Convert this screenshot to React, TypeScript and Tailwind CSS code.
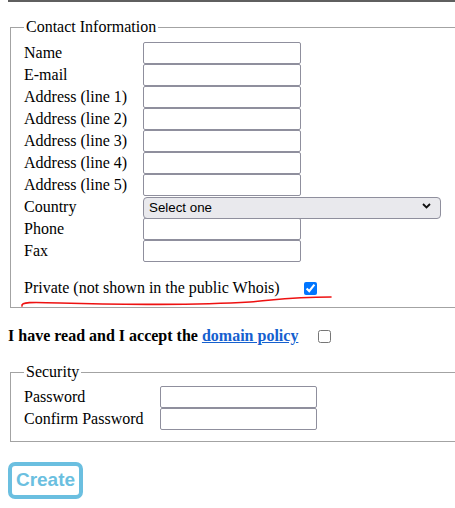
const contactRows = [
  "Name",
  "E-mail",
  "Address (line 1)",
  "Address (line 2)",
  "Address (line 3)",
  "Address (line 4)",
  "Address (line 5)",
];

function TextInput({ width = "w-[158px]" }: { width?: string }) {
  return (
    <input
      type="text"
      className={`h-[22px] ${width} rounded-[2px] border border-[#8f8f9d] bg-white px-[2px] text-[13.33px]`}
    />
  );
}

function Row({ label, labelWidth, children }: { label: string; labelWidth: string; children: React.ReactNode }) {
  return (
    <div className="flex h-[22px] items-center">
      <span className={`${labelWidth} shrink-0 leading-[18px]`}>{label}</span>
      {children}
    </div>
  );
}

export default function App() {
  return (
    <div className="relative h-[508px] w-[455px] overflow-hidden bg-white font-['Liberation_Serif',serif] text-[16px] text-black">
      <div className="ml-2 h-[2px] bg-[#5f5f5f]" />

      <fieldset className="mx-[10px] mt-4 w-[470px] border border-[#a3a3a3] px-[13px] pb-[9px] pt-[6px]">
        <legend className="px-[2px] leading-[18px]">Contact Information</legend>
        {contactRows.map((label) => (
          <Row key={label} label={label} labelWidth="w-[119px]">
            <TextInput />
          </Row>
        ))}
        <Row label="Country" labelWidth="w-[119px]">
          <div className="relative">
            <select className="h-[22px] w-[298px] appearance-none rounded-[4px] border border-[#8f8f9d] bg-[#e9e9ed] pl-[5px] font-['Liberation_Sans',Arial,sans-serif] text-[13.33px] text-black">
              <option>Select one</option>
            </select>
            <svg
              className="pointer-events-none absolute right-[10px] top-[8px]"
              width="9"
              height="6"
              viewBox="0 0 9 6"
            >
              <polyline points="1,1 4.5,4.5 8,1" fill="none" stroke="#111" strokeWidth="1.8" />
            </svg>
          </div>
        </Row>
        <Row label="Phone" labelWidth="w-[119px]">
          <TextInput />
        </Row>
        <Row label="Fax" labelWidth="w-[119px]">
          <TextInput />
        </Row>
        <div className="mt-4 flex h-[20px] items-center">
          <span className="leading-[18px]">Private (not shown in the public Whois)</span>
          <input type="checkbox" defaultChecked className="ml-[24px] h-[13px] w-[13px]" />
        </div>
      </fieldset>

      <div className="ml-2 mt-[19px] flex h-[18px] items-center font-bold leading-[18px]">
        <span>
          I have read and I accept the{" "}
          <a href="#" className="text-[#1560cf] underline">
            domain policy
          </a>
        </span>
        <input type="checkbox" className="ml-[20px] h-[13px] w-[13px]" />
      </div>

      <fieldset className="mx-[10px] mt-[18px] w-[470px] border border-[#a3a3a3] px-[13px] pb-[11px] pt-[5px]">
        <legend className="px-[2px] leading-[18px]">Security</legend>
        <Row label="Password" labelWidth="w-[136px]">
          <TextInput width="w-[157px]" />
        </Row>
        <Row label="Confirm Password" labelWidth="w-[136px]">
          <TextInput width="w-[157px]" />
        </Row>
      </fieldset>

      <button
        type="button"
        className="ml-2 mt-[20px] flex h-[37px] w-[75px] items-center justify-center rounded-[7px] border-4 border-[#6bbfe0] bg-white font-['Liberation_Sans',Arial,sans-serif] text-[19px] font-bold text-[#6bbfe0]"
      >
        Create
      </button>

      <svg
        className="pointer-events-none absolute left-0 top-0"
        width="455"
        height="508"
        viewBox="0 0 455 508"
      >
        <path
          d="M22 306 C21 302, 30 302, 60 303 C120 305, 200 305, 250 302 C275 300, 292 297, 331 297"
          fill="none"
          stroke="#ee1111"
          strokeWidth="1.6"
          strokeLinecap="round"
        />
      </svg>
    </div>
  );
}
